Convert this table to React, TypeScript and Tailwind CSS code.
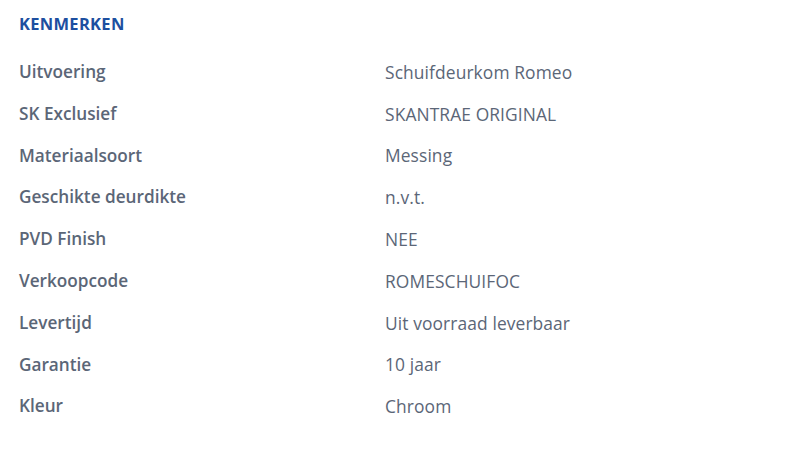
const rows: [string, string][] = [
  ["Uitvoering", "Schuifdeurkom Romeo"],
  ["SK Exclusief", "SKANTRAE ORIGINAL"],
  ["Materiaalsoort", "Messing"],
  ["Geschikte deurdikte", "n.v.t."],
  ["PVD Finish", "NEE"],
  ["Verkoopcode", "ROMESCHUIFOC"],
  ["Levertijd", "Uit voorraad leverbaar"],
  ["Garantie", "10 jaar"],
  ["Kleur", "Chroom"],
];

export default function App() {
  return (
    <div className="w-[800px] h-[456px] bg-white pl-[19px] pr-5 pt-[13px] font-['Open_Sans',sans-serif]">
      <h2 className="text-[16.5px] font-bold text-[#1d4fa0] tracking-[0.3px] leading-[22px]">KENMERKEN</h2>
      <dl className="mt-[16px]">
        {rows.map(([k, v]) => (
          <div key={k} className="grid grid-cols-[366px_1fr] h-[41.8px] items-center">
            <dt className="text-[17.2px] font-semibold text-[#5b6677]">{k}</dt>
            <dd className="text-[17.4px] tracking-[0.1px] text-[#5b6677]">{v}</dd>
          </div>
        ))}
      </dl>
    </div>
  );
}
